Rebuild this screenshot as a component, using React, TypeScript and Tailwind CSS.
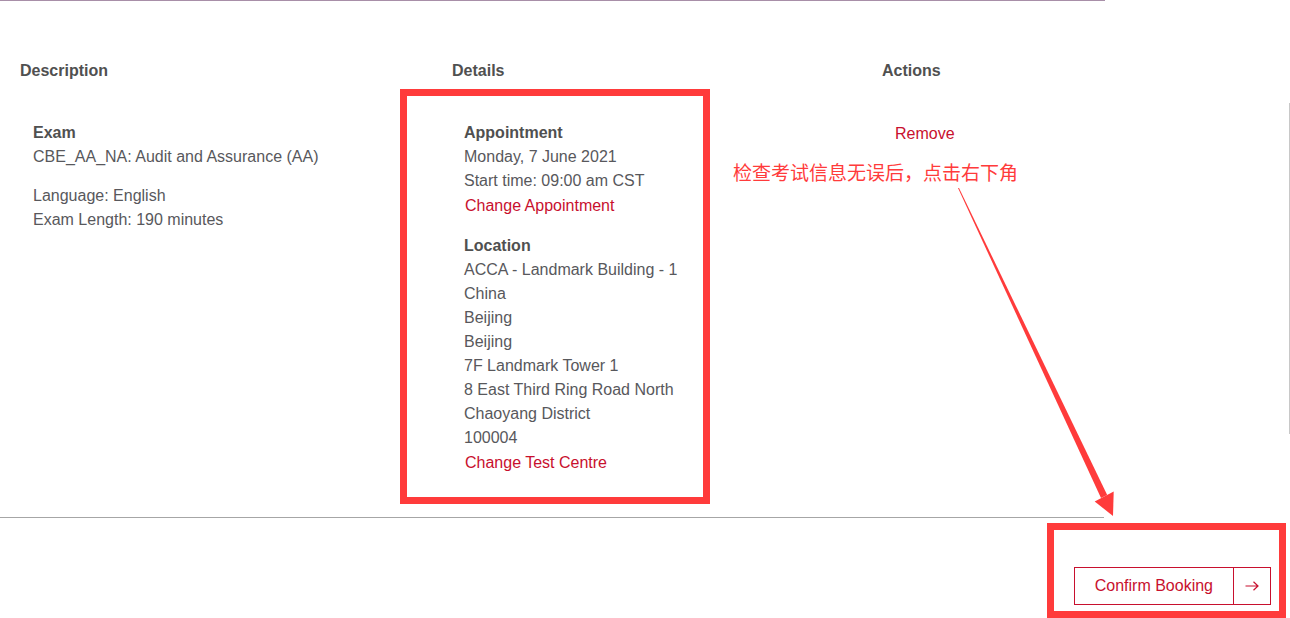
import React from "react";

const Line = ({ children, className = "" }: { children: React.ReactNode; className?: string }) => (
  <div className={"leading-6 " + className}>{children}</div>
);

export default function App() {
  return (
    <div className="relative w-[1290px] h-[618px] bg-white overflow-hidden font-['Liberation_Sans',Arial,sans-serif] text-[16px] text-[#58585c]">
      <div className="h-px w-[1105px] bg-[#a88fa8]" />

      {/* header row */}
      <div className="flex mt-[58px] font-bold leading-6 text-[#505050]">
        <div className="w-[432px] pl-5">Description</div>
        <div className="w-[430px] pl-5">Details</div>
        <div className="pl-5">Actions</div>
      </div>

      {/* body row */}
      <div className="flex mt-[20px]">
        <div className="w-[432px] pl-[33px] pt-[18px]">
          <Line className="font-bold text-[#505050]">Exam</Line>
          <Line>CBE_AA_NA: Audit and Assurance (AA)</Line>
          <div className="mt-[15px]">
            <Line>Language: English</Line>
            <Line>Exam Length: 190 minutes</Line>
          </div>
        </div>
        <div className="w-[430px] pl-[32px] pt-[18px]">
          <Line className="font-bold text-[#505050]">Appointment</Line>
          <Line>Monday, 7 June 2021</Line>
          <Line>Start time: 09:00 am CST</Line>
          <Line className="text-[#c8102e] pl-px pt-px">Change Appointment</Line>
          <div className="mt-[16px]">
            <Line className="font-bold text-[#505050]">Location</Line>
            <Line>ACCA - Landmark Building - 1</Line>
            <Line>China</Line>
            <Line>Beijing</Line>
            <Line>Beijing</Line>
            <Line>7F Landmark Tower 1</Line>
            <Line>8 East Third Ring Road North</Line>
            <Line>Chaoyang District</Line>
            <Line>100004</Line>
            <Line className="text-[#c8102e] pl-px pt-px">Change Test Centre</Line>
          </div>
        </div>
        <div className="flex-1 pl-[33px] pt-[19px]">
          <Line className="text-[#c8102e]">Remove</Line>
        </div>
        <div className="w-px h-[331px] bg-[#c8c8c8]" />
      </div>

      <div className="h-px w-[1104px] bg-[#a6a6a6] mt-[42px]" />

      {/* footer button */}
      <div className="flex justify-end pr-[19px] mt-[49px]">
        <button className="flex h-[38px] border border-[#c8102e] text-[#c8102e] bg-white">
          <span className="flex items-center h-full px-5 leading-6">Confirm Booking</span>
          <span className="flex items-center justify-center w-[37px] h-full border-l border-[#c8102e]">
            <svg width="14" height="10" viewBox="0 0 14 10" fill="none" stroke="#c8102e" strokeWidth="1.2">
              <path d="M0.5 5H13M8.5 0.8L13 5L8.5 9.2" />
            </svg>
          </span>
        </button>
      </div>

      {/* annotation overlays */}
      <div className="absolute left-[400px] top-[89px] w-[310px] h-[415px] border-[7px] border-[#ff3b3b] pointer-events-none" />
      <div className="absolute left-[1047px] top-[523px] w-[239px] h-[95px] border-[7px] border-[#ff3b3b] pointer-events-none" />
      <div className="absolute left-[733px] top-[162px] text-[19px] leading-[19px] text-[#ff3b3b] font-['Noto_Sans_CJK_SC',sans-serif] whitespace-nowrap">
        检查考试信息无误后，点击右下角
      </div>
      <svg className="absolute left-0 top-0 pointer-events-none" width="1290" height="618" viewBox="0 0 1290 618">
        <polygon points="958,188 959,188 1107.2,495 1101,498" fill="#ff3b3b" />
        <polygon points="1113.7,491.5 1094.7,501.5 1113,516" fill="#ff3b3b" />
      </svg>
    </div>
  );
}
